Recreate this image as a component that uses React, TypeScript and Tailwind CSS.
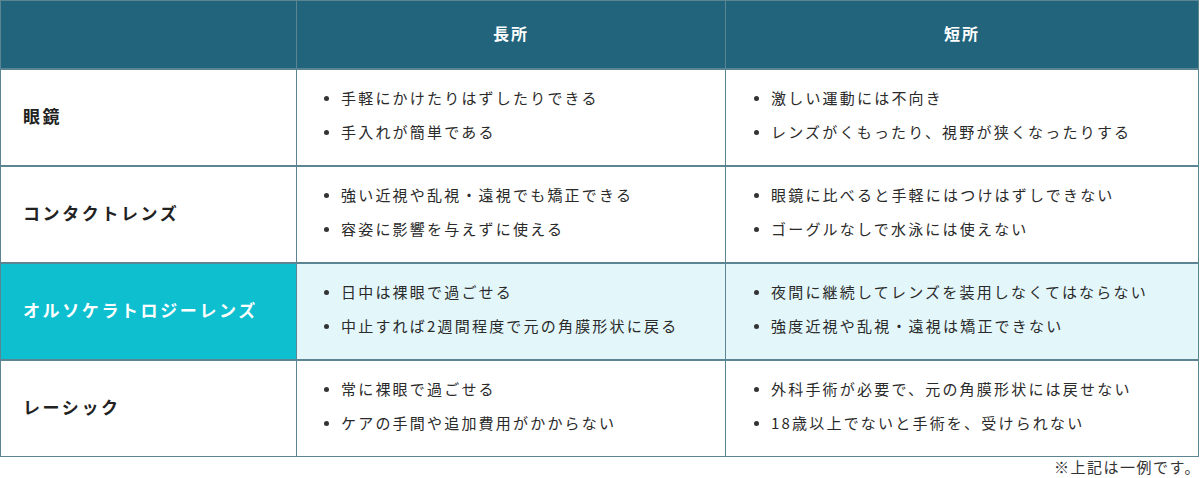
const rows = [
  {
    name: '眼鏡',
    pros: ['手軽にかけたりはずしたりできる', '手入れが簡単である'],
    cons: ['激しい運動には不向き', 'レンズがくもったり、視野が狭くなったりする'],
  },
  {
    name: 'コンタクトレンズ',
    pros: ['強い近視や乱視・遠視でも矯正できる', '容姿に影響を与えずに使える'],
    cons: ['眼鏡に比べると手軽にはつけはずしできない', 'ゴーグルなしで水泳には使えない'],
  },
  {
    name: 'オルソケラトロジーレンズ',
    highlight: true,
    pros: ['日中は裸眼で過ごせる', '中止すれば2週間程度で元の角膜形状に戻る'],
    cons: ['夜間に継続してレンズを装用しなくてはならない', '強度近視や乱視・遠視は矯正できない'],
  },
  {
    name: 'レーシック',
    pros: ['常に裸眼で過ごせる', 'ケアの手間や追加費用がかからない'],
    cons: ['外科手術が必要で、元の角膜形状には戻せない', '18歳以上でないと手術を、受けられない'],
  },
];

function Bullets({ items }: { items: string[] }) {
  return (
    <ul className="flex flex-col gap-[10px]">
      {items.map((t) => (
        <li key={t} className="flex items-center text-[15px] leading-[24px] tracking-[2.2px] text-[#2a2a2a]">
          <span className="mr-[12px] h-[5px] w-[5px] shrink-0 rounded-full bg-[#333]" />
          {t}
        </li>
      ))}
    </ul>
  );
}

export default function App() {
  return (
    <div
      className="w-[1200px] h-[478px] bg-white"
      style={{ fontFamily: '"Noto Sans CJK JP", "Noto Sans", sans-serif' }}
    >
      <div className="w-[1199px] border border-[#5b8593]">
        {/* Header */}
        <div className="grid grid-cols-[296px_429px_1fr] h-[67px] bg-[#21647c] text-white">
          <div className="border-r border-[#5b8593]" />
          <div className="flex items-center justify-center pb-[3px] border-r border-[#5b8593] text-[16px] font-bold tracking-[2px]">
            長所
          </div>
          <div className="flex items-center justify-center pb-[3px] text-[16px] font-bold tracking-[2px]">短所</div>
        </div>

        {/* Rows */}
        {rows.map((r) => (
          <div
            key={r.name}
            className={`grid grid-cols-[296px_429px_1fr] h-[97px] border-t-2 border-[#5b8593] ${
              r.highlight ? 'bg-[#e3f7fb]' : 'bg-white'
            }`}
          >
            <div
              className={`flex items-center pl-[22px] pb-[4px] border-r border-[#5b8593] text-[17px] font-bold tracking-[2.6px] ${
                r.highlight ? 'bg-[#0dbfcf] text-white' : 'text-[#222]'
              }`}
            >
              {r.name}
            </div>
            <div className="flex items-center pl-[27px] pb-[5px] border-r border-[#5b8593]">
              <Bullets items={r.pros} />
            </div>
            <div className="flex items-center pl-[28px] pb-[5px]">
              <Bullets items={r.cons} />
            </div>
          </div>
        ))}
      </div>

      <p className="-mt-[1px] -mr-[1px] text-right text-[15px] leading-[22px] tracking-[1.5px] text-[#333]">
        ※上記は一例です。
      </p>
    </div>
  );
}
